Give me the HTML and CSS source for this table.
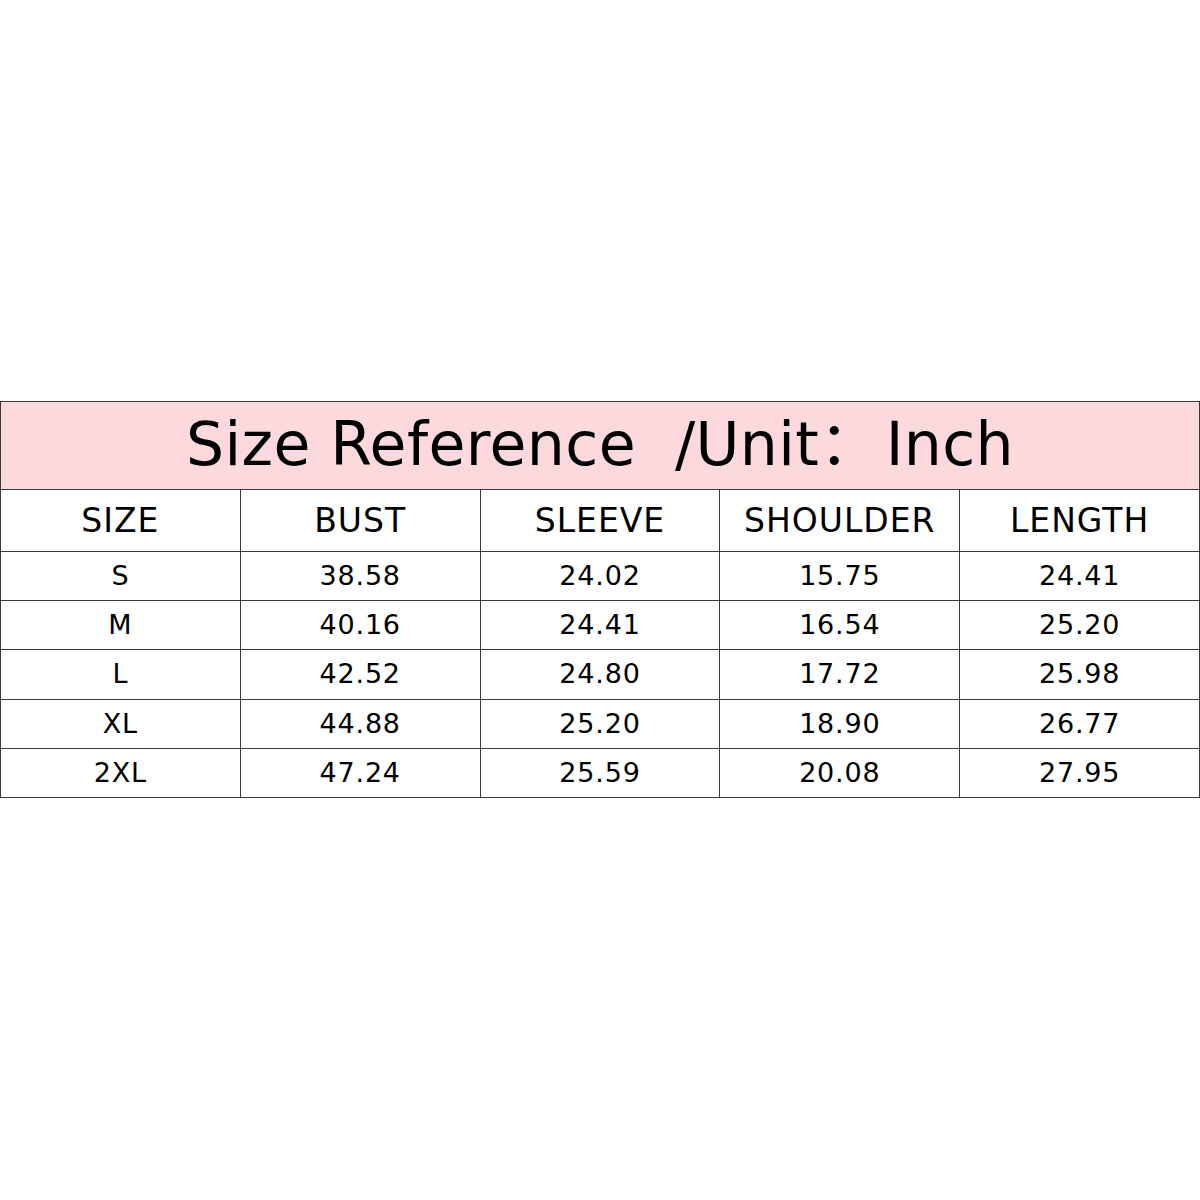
FILE: index.html
```html
<!DOCTYPE html>
<html>
<head>
<meta charset="utf-8">
<link rel="stylesheet" href="styles.css">
</head>
<body>
<div class="page">
<table class="chart">
<tr class="title-row"><td colspan="5">Size Reference&nbsp; /Unit：<span class="unit">Inch</span></td></tr>
<tr class="head-row"><td>SIZE</td><td>BUST</td><td>SLEEVE</td><td>SHOULDER</td><td>LENGTH</td></tr>
<tr class="data-row"><td>S</td><td>38.58</td><td>24.02</td><td>15.75</td><td>24.41</td></tr>
<tr class="data-row"><td>M</td><td>40.16</td><td>24.41</td><td>16.54</td><td>25.20</td></tr>
<tr class="data-row"><td>L</td><td>42.52</td><td>24.80</td><td>17.72</td><td>25.98</td></tr>
<tr class="data-row"><td>XL</td><td>44.88</td><td>25.20</td><td>18.90</td><td>26.77</td></tr>
<tr class="data-row"><td>2XL</td><td>47.24</td><td>25.59</td><td>20.08</td><td>27.95</td></tr>
</table>
</div>
</body>
</html>
```
FILE: styles.css
```css
html, body { margin: 0; padding: 0; background: #fff; }
.page { width: 1200px; height: 1200px; padding-top: 401px; box-sizing: border-box; }
.chart {
  width: 1200px;
  border-collapse: collapse;
  table-layout: fixed;
  font-family: "DejaVu Sans", "Noto Sans CJK SC", sans-serif;
  color: #000;
}
.chart td {
  border: 1px solid #3a3a3a;
  text-align: center;
  vertical-align: middle;
  padding: 0;
  width: 240px;
  box-sizing: border-box;
}
.title-row td {
  background: #fbd9dc;
  height: 88px;
  font-size: 60px;
  line-height: 70px;
  padding-bottom: 4px;
  letter-spacing: 0.4px;
}
.unit { margin-left: 6px; }
.head-row td { height: 62px; font-size: 33px; line-height: 40px; letter-spacing: 1px; }
.data-row td { height: 49.2px; font-size: 27px; line-height: 32px; letter-spacing: 0.8px; }
```
